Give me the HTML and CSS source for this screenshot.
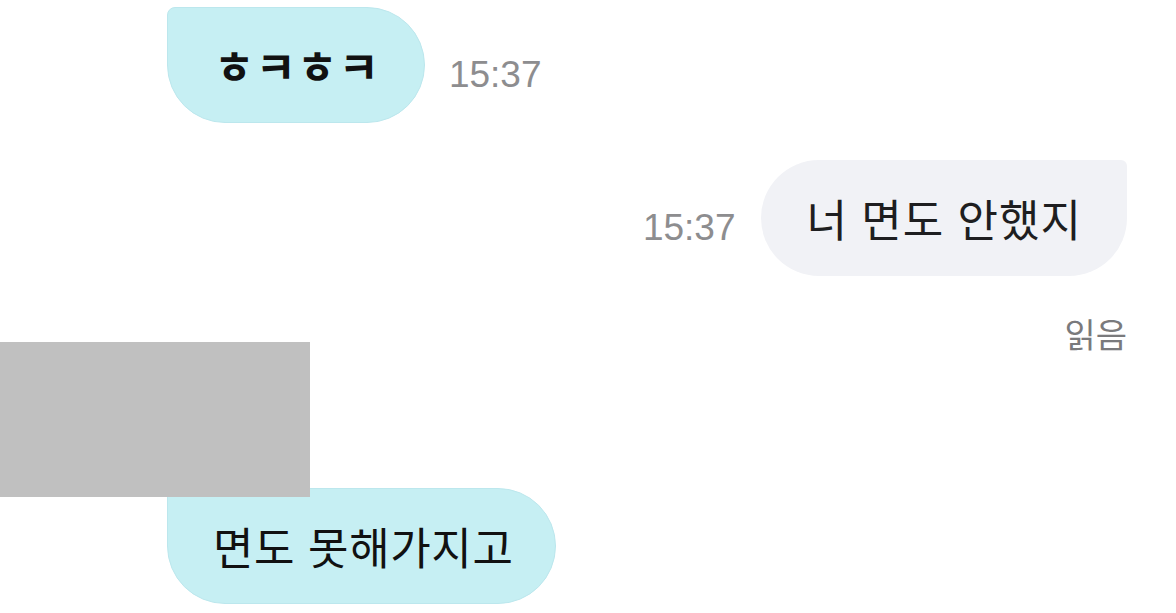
FILE: index.html
```html
<!DOCTYPE html>
<html lang="ko">
<head>
<meta charset="utf-8">
<title>채팅</title>
<link rel="stylesheet" href="styles.css">
</head>
<body>
<main class="chat">
  <div class="row row-in">
    <div class="bubble bubble-in bubble-jamo">ㅎㅋㅎㅋ</div>
    <span class="time">15:37</span>
  </div>

  <div class="row row-out">
    <span class="time">15:37</span>
    <div class="bubble bubble-out">너 면도 안했지</div>
  </div>
  <div class="read">읽음</div>

  <div class="row row-in row-last">
    <div class="bubble bubble-in bubble-wide">면도 못해가지고</div>
  </div>

  <div class="redact"></div>
</main>
</body>
</html>
```

FILE: styles.css
```css
* {
  box-sizing: border-box;
}

html,
body {
  margin: 0;
  padding: 0;
  background: #ffffff;
}

body {
  font-family: "Noto Sans CJK KR", "Noto Sans", sans-serif;
}

.chat {
  position: relative;
  width: 1176px;
  height: 613px;
  overflow: hidden;
  padding-top: 7px;
  display: flex;
  flex-direction: column;
}

.row {
  display: flex;
  align-items: center;
}

.row-in {
  padding-left: 167px;
  gap: 24px;
}

.row-out {
  justify-content: flex-end;
  padding-right: 49px;
  gap: 26px;
  margin-top: 37px;
}

.row-last {
  margin-top: 133px;
}

.bubble {
  height: 116px;
  padding: 0 45px;
  display: flex;
  align-items: center;
  font-size: 44px;
  letter-spacing: 1px;
  line-height: 1;
  white-space: nowrap;
}

.bubble-in {
  background: #c6eff3;
  border: 1px solid #bce7ed;
  color: #111111;
  border-radius: 8px 58px 58px 58px;
}

.bubble-jamo {
  font-weight: 700;
  padding: 0 44px 0 46px;
}

.bubble-wide {
  padding: 0 42px 0 45px;
  letter-spacing: 0.6px;
}

.bubble-out {
  background: #f1f2f6;
  color: #1e1e20;
  border-radius: 58px 6px 58px 58px;
}

.time {
  font-family: "Liberation Sans", "Noto Sans", sans-serif;
  font-size: 37px;
  line-height: 1;
  color: #8d8d8f;
  margin-top: 18px;
}

.read {
  align-self: flex-end;
  margin-right: 49px;
  margin-top: 38px;
  font-size: 34px;
  line-height: 1.2;
  color: #7a7a7c;
}

/* grey block laid over the avatar area */
.redact {
  position: absolute;
  left: 0;
  top: 342px;
  width: 310px;
  height: 155px;
  background: #c0c0c0;
}
```
